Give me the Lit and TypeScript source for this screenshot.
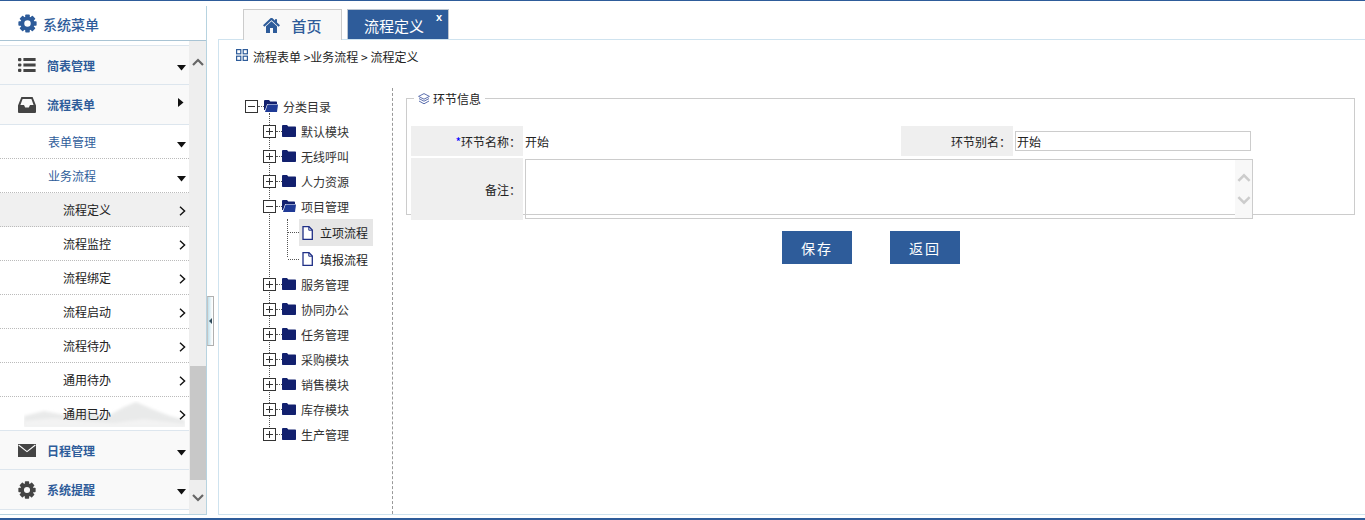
import { LitElement, html, css, svg } from "lit";
import { customElement } from "lit/decorators.js";

const gear = (c: string, s: number) => html`<svg class="ic" width=${s} height=${s} viewBox="0 0 20 20">
  <g fill=${c}>${[0, 45, 90, 135, 180, 225, 270, 315].map((a) => svg`<rect x="7.6" y="0.4" width="4.8" height="5" rx="0.8" transform="rotate(${a} 10 10)"/>`)}</g>
  <circle cx="10" cy="10" r="5.4" fill="none" stroke=${c} stroke-width="4"/></svg>`;
const listIc = html`<svg class="ic" width="18" height="14" viewBox="0 0 18 14" fill="#444"><rect x="0" y="0" width="3.4" height="3.2" rx="1"/><rect x="0" y="5.4" width="3.4" height="3.2" rx="1"/><rect x="0" y="10.8" width="3.4" height="3.2" rx="1"/><rect x="5.4" y="0" width="12.2" height="3"/><rect x="5.4" y="5.5" width="12.2" height="3"/><rect x="5.4" y="11" width="12.2" height="3"/></svg>`;
const inboxIc = html`<svg class="ic" width="18" height="16" viewBox="0 0 18 16"><path fill="#444" fill-rule="evenodd" d="M3.4 0H14.6L18 8.5V15a1 1 0 0 1-1 1H1a1 1 0 0 1-1-1V8.5ZM4.6 2 2.4 8H6l1.2 2.4h3.6L12 8h3.6L13.4 2Z"/></svg>`;
const mailIc = html`<svg class="ic" width="18" height="13" viewBox="0 0 18 13"><rect width="18" height="13" fill="#444"/><path d="M0.6 1 9 7.6 17.4 1" fill="none" stroke="#fff" stroke-width="1.1"/></svg>`;
const homeIc = html`<svg width="17" height="15" viewBox="0 0 17 15"><path d="M.7 8 8.5.8 16.3 8" fill="none" stroke="#2e5c9a" stroke-width="2.2"/><path d="M3 8.2 8.5 3.2 14 8.2V15H10V10H7V15H3Z" fill="#2e5c9a"/><rect x="12" y="1.2" width="2" height="4" fill="#2e5c9a"/></svg>`;
const folderClosed = html`<svg class="fd" width="14" height="12" viewBox="0 0 14 12"><path d="M0 1.2C0 .5.5 0 1.2 0H5L6.3 1.6H13c.6 0 1 .4 1 1V11c0 .6-.4 1-1 1H1c-.6 0-1-.4-1-1Z" fill="#12206e"/></svg>`;
const folderOpen = html`<svg class="fd" width="14" height="12" viewBox="0 0 14 12"><path d="M0 1.2C0 .5.5 0 1.2 0H5L6.3 1.6H12c.6 0 1 .4 1 1V4H3.2L1 10H0Z" fill="#12206e"/><path d="M3.6 4.6H14L13 12H1Z" fill="#1f3a96"/></svg>`;
const fileIc = html`<svg class="fd" width="11" height="14" viewBox="0 0 11 14"><path d="M1 .7H7L10.3 4V13.3H1Z" fill="#fff" stroke="#1f2f86" stroke-width="1.3"/><path d="M6.8.8V4.2H10.2" fill="none" stroke="#1f2f86"/></svg>`;
const gridIc = html`<svg width="12" height="12" viewBox="0 0 12 12" fill="none" stroke="#2e5c9a" stroke-width="1.2"><rect x=".6" y=".6" width="4.2" height="4.2"/><rect x="7.2" y=".6" width="4.2" height="4.2"/><rect x=".6" y="7.2" width="4.2" height="4.2"/><rect x="7.2" y="7.2" width="4.2" height="4.2"/></svg>`;
const layersIc = html`<svg width="12" height="12" viewBox="0 0 12 12" fill="none" stroke="#4a5fa5" stroke-width=".9"><path d="M6 .6 11.4 3.4 6 6.2.6 3.4Z"/><path d="M1 5.6 6 8.2 11 5.6"/><path d="M1 8 6 10.8 11 8"/></svg>`;
const chev = (up: boolean, c: string, w = 12, h = 8) => html`<svg width=${w} height=${h} viewBox="0 0 12 8"><path d=${up ? "M1 7 6 2 11 7" : "M1 1 6 6 11 1"} fill="none" stroke=${c} stroke-width="2.2"/></svg>`;
const triDown = html`<svg class="ar" width="9" height="6" viewBox="0 0 9 6"><path d="M0 0H9L4.5 5.5Z" fill="#111"/></svg>`;
const triRight = html`<svg class="ar ar-r" width="6" height="9" viewBox="0 0 6 9"><path d="M0 0 5.5 4.5 0 9Z" fill="#111"/></svg>`;
const chevRight = html`<svg class="ar ar-c" width="7" height="10" viewBox="0 0 7 10"><path d="M1 .7 5.6 5 1 9.3" fill="none" stroke="#111" stroke-width="1.4"/></svg>`;
const mountain = html`<svg class="mt" width="161" height="26" viewBox="0 0 161 26" preserveAspectRatio="none">
  <defs><filter id="bl"><feGaussianBlur stdDeviation="1.6"/></filter></defs>
  <path filter="url(#bl)" d="M0 26V15L20 10 40 14 62 9 82 16 100 6 112 1 128 8 146 15 161 19V26Z" fill="#e9eaea"/>
  <path filter="url(#bl)" d="M0 26V20L30 17 60 20 90 22 120 18 161 23V26Z" fill="#f3f3f3"/></svg>`;

const leafs = ["流程定义", "流程监控", "流程绑定", "流程启动", "流程待办", "通用待办", "通用已办"];
const modsA = ["默认模块", "无线呼叫", "人力资源"];
const modsB = ["服务管理", "协同办公", "任务管理", "采购模块", "销售模块", "库存模块", "生产管理"];

@customElement("app-root")
export class AppRoot extends LitElement {
  static styles = css`
    :host { display: block; position: relative; width: 1365px; height: 520px; overflow: hidden; background: #fff;
      font-family: "Noto Sans CJK SC", "Liberation Sans", sans-serif; font-size: 12px; color: #222; box-sizing: border-box;
      border-top: 1px solid #2e5c9a; border-bottom: 2px solid #2e5c9a; }
    * { box-sizing: border-box; }
    .shell { display: flex; height: 517px; }
    .side { width: 207px; flex: none; padding-top: 5px; height: 514px; display: flex; flex-direction: column; }
    .side-in { flex: 1; display: flex; flex-direction: column; border-right: 1px solid #b7d3e0; border-bottom: 1px solid #b7d3e0; min-height: 0; }
    .head { height: 35px; flex: none; display: flex; align-items: center; padding-left: 18px; gap: 6px; color: #2e5c9a; font-size: 14px; font-weight: 500; border-bottom: 1px solid #a9c4d4; padding-top: 1px; }
    .menu { flex: 1; display: flex; min-height: 0; }
    .list { width: 189px; flex: none; padding-top: 4px; border-top: 0; }
    .sb { flex: 1; background: #eee; display: flex; flex-direction: column; align-items: center; position: relative; padding: 17px 0 0; }
    .sb .thumb { position: absolute; left: 1px; right: 0; top: 325px; height: 114px; background: #c8c8c8; }
    .sb .dn { position: absolute; top: 447px; left: 3px; }
    .top { height: 40px; border-top: 1px solid #dde6ee; border-bottom: 1px solid #dde6ee; background: #f9f9f9; display: flex; align-items: center; position: relative; padding-left: 18px; color: #2e5c9a; font-weight: 700; }
    .top + .top { border-top: 0; }
    .top .ib { width: 29px; display: flex; }
    .top .ar, .sub .ar { position: absolute; right: 3px; top: 19px; }
    .top .ar-r { right: 5px; top: 13px; }
    .sub { height: 34px; display: flex; align-items: center; padding-left: 48px; color: #2e5c9a; position: relative; border-bottom: 1px dotted #bbb; }
    .sub .ar { top: 17px; }
    .leaf { height: 34px; display: flex; align-items: center; padding-left: 63px; position: relative; border-bottom: 1px dotted #bbb; }
    .leaf.on { background: #f0f0f0; }
    .leaf .ar-c { position: absolute; right: 3px; top: 13px; }
    .leaf.last { height: 33px; border-bottom: 0; }
    .leaf span, .leaf .ar-c { z-index: 1; }
    .mt { position: absolute; left: 24px; top: 4px; }
    .handle { position: absolute; left: 207px; top: 295px; width: 7px; height: 50px; border: 1px solid #b0b0b0; border-left-color: #c4c4c4; background: linear-gradient(90deg, #bfe0ec, #f4f9fb 70%, #fff); display: flex; align-items: center; justify-content: center; }
    .handle i { width: 0; height: 0; border: 3px solid transparent; border-left: 0; border-right: 3px solid #2f4a5a; }
    .main { flex: 1; padding-left: 11px; padding-top: 8px; display: flex; flex-direction: column; min-width: 0; height: 514px; }
    .tabs { height: 30px; flex: none; display: flex; padding-left: 25px; gap: 5px; }
    .tab { height: 31px; font-size: 15px; display: flex; align-items: center; justify-content: center; position: relative; }
    .tab.home { width: 99px; background: #f8f8f8; border: 1px solid #ccc; border-bottom: 0; color: #2e5c9a; gap: 11px; font-weight: 500; z-index: 2; }
    .tab.cur { width: 102px; background: #2e5c9a; border: 1px solid #bcc6d2; border-bottom: 0; color: #fff; padding-right: 8px; }
    .tab .x { position: absolute; right: 6px; top: 1px; font-size: 11px; font-family: "Liberation Sans", sans-serif; font-weight: 700; line-height: 12px; }
    .panel { flex: 1; border: 1px solid #cfe3ef; border-right: 0; display: flex; flex-direction: column; min-height: 0; background: #fff; z-index: 1; }
    .crumb { height: 48px; flex: none; padding: 8px 0 0 17px; display: flex; gap: 5px; align-items: flex-start; line-height: 17px; white-space: pre; }
    .crumb svg { margin-top: 1px; }
    .content { flex: 1; display: flex; min-height: 0; }
    .tree { width: 174px; flex: none; border-right: 1px dashed #999; padding: 6px 0 0 26px; color: #333; }
    .row { height: 25px; display: flex; align-items: center; position: relative; }
    .box { width: 13px; height: 13px; border: 1px solid #333; background: #fff; position: relative; flex: none; z-index: 1; }
    .box::before { content: ""; position: absolute; left: 2px; right: 2px; top: 5px; height: 1px; background: #333; }
    .box.plus::after { content: ""; position: absolute; top: 2px; bottom: 2px; left: 5px; width: 1px; background: #333; }
    .dots { width: 6px; border-top: 1px dotted #555; flex: none; }
    .row .fd { flex: none; margin-top: -2px; }
    .row .tx { margin-left: 5px; }
    .kids { position: relative; padding-left: 18px; }
    .kids::before { content: ""; position: absolute; left: 24px; top: -6px; bottom: 16px; border-left: 1px dotted #555; }
    .files { position: relative; padding-left: 18px; }
    .files::before { content: ""; position: absolute; left: 24px; top: 0; height: 38px; border-left: 1px dotted #555; }
    .fl { display: flex; align-items: center; position: relative; height: 26px; }
    .fl.sel { height: 27px; }
    .fl .dots { width: 11px; margin-left: 7px; }
    .fl .pick { display: flex; align-items: center; height: 100%; width: 74px; padding-left: 3px; gap: 7px; color: #222; }
    .fl.sel .pick { background: #e6e6e6; }
    .form { flex: 1; padding: 0 10px 0 13px; min-width: 0; }
    fieldset { margin: 2px 0 0; border: 1px solid #ccc; padding: 19px 0 0 4px; height: 125px; min-width: 0; }
    fieldset legend { padding: 0 4px 0 4px; margin-left: 3px; display: flex; align-items: center; gap: 3px; color: #222; line-height: 17px; }
    .grid { display: grid; grid-template-columns: 112px 378px 112px 2px 238px; grid-template-rows: 30px 62px; row-gap: 2px; }
    .lab { background: #efefef; display: flex; align-items: center; justify-content: flex-end; padding-right: 2px; }
    .lab b { color: #00f; font-weight: 400; }
    .val { display: flex; align-items: center; padding-left: 2px; }
    .inp { grid-column: 5; margin-top: 5px; height: 20px; width: 236px; border: 1px solid #ccc; padding-left: 1px; display: flex; align-items: center; }
    .ta { grid-column: 2 / 6; margin-left: 2px; height: 60px; margin-top: 1px; border: 1px solid #ccc; width: 728px; display: flex; justify-content: flex-end; }
    .ta .tsb { width: 17px; background: #f8f8f8; display: flex; flex-direction: column; align-items: center; padding-top: 13px; gap: 14px; }
    .btns { display: flex; gap: 38px; padding: 16px 0 0 376px; }
    .btn { width: 70px; height: 33px; background: #2e5c9a; color: #fff; font-size: 14px; letter-spacing: 2px; display: flex; align-items: center; justify-content: center; }
  `;

  render() {
    return html`<div class="shell">
      <aside class="side"><div class="side-in">
        <div class="head">${gear("#2e5c9a", 19)}<span>系统菜单</span></div>
        <div class="menu">
          <div class="list">
            <div class="top"><span class="ib">${listIc}</span>简表管理${triDown}</div>
            <div class="top"><span class="ib">${inboxIc}</span>流程表单${triRight}</div>
            <div class="sub">表单管理${triDown}</div>
            <div class="sub">业务流程${triDown}</div>
            ${leafs.map((l, i) => html`<div class="leaf ${i === 0 ? "on" : ""} ${i === 6 ? "last" : ""}">
              ${i === 6 ? mountain : ""}<span>${l}</span>${chevRight}</div>`)}
            <div class="top" style="border-top:1px solid #dde6ee"><span class="ib">${mailIc}</span>日程管理${triDown}</div>
            <div class="top"><span class="ib">${gear("#444", 18)}</span>系统提醒${triDown}</div>
          </div>
          <div class="sb">
            ${chev(true, "#666")}
            <div class="thumb"></div>
            <div class="dn">${chev(false, "#666")}</div>
          </div>
        </div>
      </div></aside>
      <div class="handle"><i></i></div>
      <main class="main">
        <div class="tabs">
          <div class="tab home">${homeIc}<span>首页</span></div>
          <div class="tab cur">流程定义<span class="x">x</span></div>
        </div>
        <div class="panel">
          <div class="crumb">${gridIc}<span>流程表单 &gt;业务流程 &gt; 流程定义</span></div>
          <div class="content">
            <div class="tree">
              <div class="row"><span class="box"></span><span class="dots"></span>${folderOpen}<span class="tx">分类目录</span></div>
              <div class="kids">
                ${modsA.map((m) => html`<div class="row"><span class="box plus"></span><span class="dots"></span>${folderClosed}<span class="tx">${m}</span></div>`)}
                <div class="row"><span class="box"></span><span class="dots"></span>${folderOpen}<span class="tx">项目管理</span></div>
                <div class="files">
                  <div class="fl sel"><span class="dots"></span><span class="pick">${fileIc}<span>立项流程</span></span></div>
                  <div class="fl"><span class="dots"></span><span class="pick">${fileIc}<span>填报流程</span></span></div>
                </div>
                ${modsB.map((m) => html`<div class="row"><span class="box plus"></span><span class="dots"></span>${folderClosed}<span class="tx">${m}</span></div>`)}
              </div>
            </div>
            <div class="form">
              <fieldset>
                <legend>${layersIc}<span>环节信息</span></legend>
                <div class="grid">
                  <div class="lab"><b>*</b>环节名称：</div>
                  <div class="val">开始</div>
                  <div class="lab">环节别名：</div>
                  <div class="inp">开始</div>
                  <div class="lab">备注：</div>
                  <div class="ta"><div class="tsb">${chev(true, "#ccc", 14, 9)}${chev(false, "#ccc", 14, 9)}</div></div>
                </div>
              </fieldset>
              <div class="btns"><div class="btn">保存</div><div class="btn">返回</div></div>
            </div>
          </div>
        </div>
      </main>
    </div>`;
  }
}
